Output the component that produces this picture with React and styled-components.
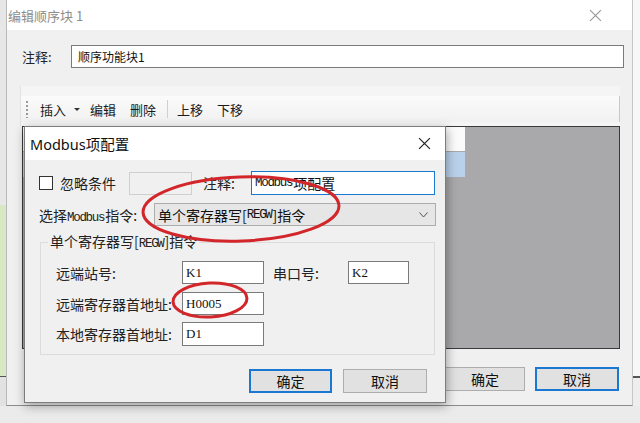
import React from "react";
import styled, { createGlobalStyle } from "styled-components";

const GlobalStyle = createGlobalStyle`
  html, body {
    margin: 0;
    padding: 0;
    width: 640px;
    height: 423px;
    overflow: hidden;
    background: #ebebeb;
  }
  body {
    font-family: "Noto Sans CJK SC", "Noto Sans", sans-serif;
    color: #1a1a1a;
  }
`;

const Screen = styled.div`
  position: relative;
  width: 640px;
  height: 423px;
  display: flex;
  flex-direction: column;
`;

const Desk = styled.div`
  display: flex;
  height: 406px;
`;

const Edge = styled.div`
  width: ${(p) => p.w}px;
  display: flex;
  flex-direction: column;
`;

const EdgePart = styled.div`
  height: ${(p) => p.h}px;
  flex: ${(p) => (p.h ? "none" : 1)};
  background: ${(p) => p.c};
`;

const Window = styled.div`
  width: 627px;
  box-sizing: border-box;
  background: #f0f0f0;
  border-left: 1px solid #b9b9b9;
  border-right: 1px solid #c6c6c6;
  border-bottom: 1px solid #8c8c8c;
  display: flex;
  flex-direction: column;
`;

const TitleBar = styled.div`
  height: 30px;
  flex: none;
  background: #fff;
  display: flex;
  align-items: center;
  padding: 0 30px 0 1px;
  font-size: 13px;
  color: #8d8d8d;
`;

const Close = styled.svg`
  margin-left: auto;
  width: ${(p) => p.size}px;
  height: ${(p) => p.size}px;
  stroke: ${(p) => p.color};
  stroke-width: 1.1;
  fill: none;
`;

const CommentRow = styled.div`
  display: flex;
  align-items: center;
  margin: 15px 0 0 15px;
`;

const OuterLabel = styled.span`
  width: 49px;
  font-size: 13px;
  color: #222;
`;

const OuterInput = styled.div`
  width: 553px;
  height: 23px;
  box-sizing: border-box;
  border: 1px solid #7a7a7a;
  background: #fff;
  display: flex;
  align-items: center;
  padding-left: 6px;
  font-size: 12px;
  color: #111;
`;

const ToolPanel = styled.div`
  margin: 18px 0 0 13px;
  width: 600px;
  height: 40px;
  box-sizing: border-box;
  background: #f5f5f6;
  border-left: 1px solid #e2e2e2;
  padding-top: 10px;
`;

const ToolStrip = styled.div`
  height: 26px;
  display: flex;
  align-items: center;
  background: linear-gradient(#fbfbfb, #f1f1f2);
  border-right: 1px solid #c8c8c8;
  padding-left: 5px;
  font-size: 13px;
  color: #1a1a1a;
`;

const Grip = styled.div`
  width: 2px;
  height: 18px;
  margin-right: 12px;
  background: radial-gradient(circle, #9a9a9a 0.8px, transparent 1px) 0 0 / 2px 4px;
`;

const ToolItem = styled.span`
  margin-right: ${(p) => p.mr}px;
`;

const DropArrow = styled.span`
  width: 0;
  height: 0;
  border-left: 3px solid transparent;
  border-right: 3px solid transparent;
  border-top: 3px solid #333;
  margin-right: 10px;
`;

const ToolSep = styled.div`
  width: 1px;
  height: 18px;
  background: #cfcfcf;
  margin-right: 9px;
`;

const Grid = styled.div`
  margin-left: 15px;
  width: 598px;
  height: 223px;
  box-sizing: border-box;
  border: 1px solid #3a3a3a;
  background: #a9a9ab;
  display: flex;
  flex-direction: column;
`;

const GridRow = styled.div`
  width: 442px;
  height: ${(p) => p.h}px;
  background: ${(p) => p.c};
  border-top: 1px solid ${(p) => p.edge};
`;

const ButtonRow = styled.div`
  display: flex;
  justify-content: flex-end;
  gap: ${(p) => p.gap}px;
  margin-top: ${(p) => p.mt}px;
  padding-right: ${(p) => p.pr}px;
`;

const Button = styled.div`
  width: ${(p) => p.w}px;
  height: 24px;
  box-sizing: border-box;
  background: #e1e1e1;
  border: ${(p) => (p.primary ? "2px solid #1a78d2" : "1px solid #adadad")};
  display: flex;
  align-items: center;
  justify-content: center;
  font-size: 14px;
  color: #111;
`;

const BottomStrip = styled.div`
  flex: 1;
  background: #ebebeb;
`;

/* Modbus dialog */

const Dialog = styled.div`
  position: absolute;
  left: 24px;
  top: 126px;
  width: 422px;
  height: 277px;
  box-sizing: border-box;
  border: 1px solid #7c7c7c;
  background: #f0f0f0;
  box-shadow: 1px 3px 10px rgba(0, 0, 0, 0.35);
  display: flex;
  flex-direction: column;
`;

const DialogTitle = styled.div`
  height: 33px;
  flex: none;
  background: #fff;
  display: flex;
  align-items: center;
  padding: 0 14px 0 5px;
  font-size: 14.5px;
  color: #111;
  font-family: "Noto Sans", "Noto Sans CJK SC", sans-serif;
`;

const Body = styled.div`
  padding: 11px 0 0 14px;
  display: flex;
  flex-direction: column;
`;

const Row = styled.div`
  display: flex;
  align-items: center;
  margin-top: ${(p) => p.mt || 0}px;
`;

const Check = styled.div`
  width: 14px;
  height: 14px;
  box-sizing: border-box;
  border: 1px solid #333;
  background: #fff;
  margin-right: 7px;
`;

const Label = styled.span`
  width: ${(p) => p.w}px;
  flex: none;
  font-size: 14px;
  color: #222;
  white-space: nowrap;
`;

const Mono = styled.span`
  font-family: "Liberation Mono", monospace;
  font-size: 12.5px;
  letter-spacing: -1.3px;
  margin-right: 1px;
`;

const Field = styled.div`
  width: ${(p) => p.w}px;
  height: ${(p) => p.h || 23}px;
  box-sizing: border-box;
  flex: none;
  margin-right: ${(p) => p.mr || 0}px;
  background: ${(p) => (p.disabled ? "#f0f0f0" : "#fff")};
  border: 1px solid
    ${(p) => (p.focused ? "#1a78d2" : p.disabled ? "#cfcfcf" : "#7a7a7a")};
  display: flex;
  align-items: center;
  padding-left: 3px;
  font-family: "Liberation Serif", serif;
  font-size: 13px;
  color: #111;
`;

const CjkText = styled.span`
  font-family: "Noto Sans CJK SC", sans-serif;
  font-size: 14px;
`;

const Combo = styled.div`
  width: 282px;
  height: 23px;
  box-sizing: border-box;
  background: #e6e6e6;
  border: 1px solid #adadad;
  display: flex;
  align-items: center;
  padding: 0 7px 0 3px;
  font-size: 14px;
  color: #111;
`;

const Chevron = styled.svg`
  margin-left: auto;
  width: 9px;
  height: 6px;
  stroke: #555;
  fill: none;
  stroke-width: 1;
`;

const Group = styled.fieldset`
  margin: 7px 0 0 1px;
  width: 395px;
  box-sizing: border-box;
  border: 1px solid #dcdcdc;
  padding: 1px 0 8px 15px;
  min-width: 0;
`;

const Legend = styled.legend`
  margin-left: -8px;
  padding: 0 2px;
  font-size: 14px;
  color: #222;
  line-height: 16px;
`;

const Marks = styled.svg`
  position: absolute;
  left: 0;
  top: 0;
  width: 640px;
  height: 423px;
  pointer-events: none;
  fill: none;
  stroke: #d2262b;
  stroke-width: 3;
`;

const X = ({ size, color }) => (
  <Close size={size} color={color} viewBox="0 0 12 12">
    <path d="M1 1 L11 11 M11 1 L1 11" />
  </Close>
);

const App = () => (
  <Screen>
    <GlobalStyle />
    <Desk>
      <Edge w={6}>
        <EdgePart h={205} c="#e7e7e7" />
        <EdgePart h={171} c="#d7e9c2" />
        <EdgePart h={1} c="#555" />
        <EdgePart c="#e2e2e2" />
      </Edge>
      <Window>
        <TitleBar>
          编辑顺序块 1
          <X size={13} color="#9a9a9a" />
        </TitleBar>
        <CommentRow>
          <OuterLabel>注释:</OuterLabel>
          <OuterInput>顺序功能块1</OuterInput>
        </CommentRow>
        <ToolPanel>
          <ToolStrip>
            <Grip />
            <ToolItem mr={8}>插入</ToolItem>
            <DropArrow />
            <ToolItem mr={14}>编辑</ToolItem>
            <ToolItem mr={11}>删除</ToolItem>
            <ToolSep />
            <ToolItem mr={14}>上移</ToolItem>
            <ToolItem mr={0}>下移</ToolItem>
          </ToolStrip>
        </ToolPanel>
        <Grid>
          <GridRow h={23} c="#fbfbfb" edge="#fbfbfb" />
          <GridRow h={25} c="#b9d1ea" edge="#a9a9ab" />
        </Grid>
        <ButtonRow gap={10} mt={18} pr={13}>
          <Button w={80}>确定</Button>
          <Button w={84} primary>
            取消
          </Button>
        </ButtonRow>
      </Window>
      <Edge w={7}>
        <EdgePart h={376} c="#f7f7f7" />
        <EdgePart h={2} c="#555" />
        <EdgePart c="#eeeeee" />
      </Edge>
    </Desk>
    <BottomStrip />

    <Dialog>
      <DialogTitle>
        Modbus项配置
        <X size={13} color="#222" />
      </DialogTitle>
      <Body>
        <Row>
          <Check />
          <Label w={69}>忽略条件</Label>
          <Field w={63} mr={11} disabled />
          <Label w={48}>注释:</Label>
          <Field w={184} h={24} focused>
            <Mono>Modbus</Mono>
            <CjkText>项配置</CjkText>
          </Field>
        </Row>
        <Row mt={8}>
          <Label w={115}>
            选择<Mono>Modbus</Mono>指令:
          </Label>
          <Combo>
            单个寄存器写[<Mono>REGW</Mono>]指令
            <Chevron viewBox="0 0 9 6">
              <path d="M0.5 0.5 L4.5 5 L8.5 0.5" />
            </Chevron>
          </Combo>
        </Row>
        <Group>
          <Legend>
            单个寄存器写[<Mono>REGW</Mono>]指令
          </Legend>
          <Row mt={8}>
            <Label w={126}>远端站号:</Label>
            <Field w={82} mr={9}>K1</Field>
            <Label w={75}>串口号:</Label>
            <Field w={61}>K2</Field>
          </Row>
          <Row mt={8}>
            <Label w={126}>远端寄存器首地址:</Label>
            <Field w={82}>H0005</Field>
          </Row>
          <Row mt={7}>
            <Label w={126}>本地寄存器首地址:</Label>
            <Field w={82} h={24}>D1</Field>
          </Row>
        </Group>
        <ButtonRow gap={11} mt={14} pr={18}>
          <Button w={83} primary>
            确定
          </Button>
          <Button w={84}>取消</Button>
        </ButtonRow>
      </Body>
    </Dialog>

    <Marks viewBox="0 0 640 423">
      <ellipse cx="241" cy="209" rx="98" ry="32" transform="rotate(-2 241 209)" />
      <ellipse cx="210" cy="300" rx="37" ry="17" transform="rotate(-3 210 300)" />
    </Marks>
  </Screen>
);

export default App;
